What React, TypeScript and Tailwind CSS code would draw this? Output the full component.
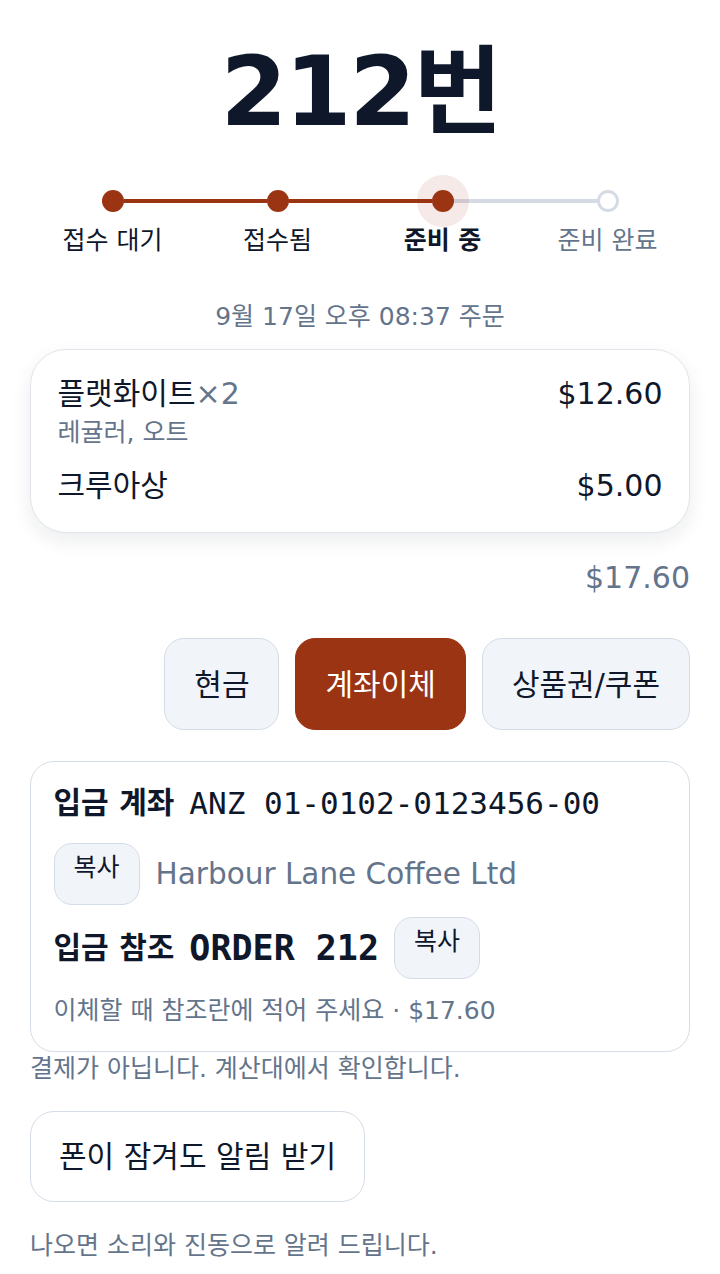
import React from "react";

const steps = ["접수 대기", "접수됨", "준비 중", "준비 완료"];

function Dot({ i }: { i: number }) {
  if (i < 2) return <div className="h-[22px] w-[22px] shrink-0 rounded-full bg-[#9a3412]" />;
  if (i === 2)
    return (
      <div className="relative z-10 h-[22px] w-[22px] shrink-0 rounded-full bg-[#9a3412] shadow-[0_0_0_15px_rgba(154,52,18,0.1)]" />
    );
  return <div className="h-[22px] w-[22px] shrink-0 rounded-full border-[3px] border-[#d5dbe5] bg-white" />;
}

function Stepper() {
  return (
    <div className="mt-[39px] grid grid-cols-4">
      {steps.map((s, i) => (
        <div key={s} className="flex flex-col items-center">
          <div className="flex h-[44px] w-full items-center">
            <div
              className={
                i === 0
                  ? "h-[4px] flex-1 bg-transparent"
                  : i <= 2
                  ? "h-[4px] flex-1 bg-[#9a3412]"
                  : "h-[4px] flex-1 bg-[#d5dbe5]"
              }
            />
            <Dot i={i} />
            <div
              className={
                i === 3
                  ? "h-[4px] flex-1 bg-transparent"
                  : i < 2
                  ? "h-[4px] flex-1 bg-[#9a3412]"
                  : "h-[4px] flex-1 bg-[#d5dbe5]"
              }
            />
          </div>
          <div
            className={
              i === 2
                ? "text-[25px] font-bold leading-[36px] text-[#0f172a]"
                : i === 3
                ? "text-[25px] leading-[36px] text-[#64748b]"
                : "text-[25px] leading-[36px] text-[#0f172a]"
            }
          >
            {s}
          </div>
        </div>
      ))}
    </div>
  );
}

function CopyBtn() {
  return (
    <button className="flex h-[62px] shrink-0 items-start justify-center rounded-[18px] border-[1.5px] border-[#d4dce7] bg-[#f1f5f9] px-[19px] pt-[7px] text-[25px] leading-[34px] text-[#0f172a]">
      복사
    </button>
  );
}

export default function App() {
  return (
    <div className="min-h-[1274px] bg-white px-[30px] pt-[44px] font-['DejaVu_Sans','Noto_Sans_CJK_KR',sans-serif] text-[#0f172a]">
      <h1 className="text-center text-[96px] font-bold leading-none tracking-[-0.025em] text-[#0f172a]">212번</h1>

      <Stepper />

      <div className="mt-[40px] text-center text-[25px] leading-[36px] text-[#64748b]">9월 17일 오후 08:37 주문</div>

      <div className="mt-[14px] rounded-[36px] border-[1.5px] border-[#e0e5ec] bg-white px-[26.5px] pb-[26px] pt-[24px] shadow-[0_8px_20px_rgba(15,23,42,0.08)]">
        <div className="flex items-center justify-between">
          <div className="text-[30px] leading-[40px]">
            플랫화이트<span className="text-[#64748b]">×2</span>
          </div>
          <div className="text-[30px] leading-[40px]">$12.60</div>
        </div>
        <div className="mt-[3px] text-[25px] leading-[32px] text-[#64748b]">레귤러, 오트</div>
        <div className="mt-[17px] flex items-center justify-between">
          <div className="text-[30px] leading-[40px]">크루아상</div>
          <div className="text-[30px] leading-[40px]">$5.00</div>
        </div>
      </div>

      <div className="mt-[25px] text-right text-[30px] leading-[40px] text-[#64748b]">$17.60</div>

      <div className="mt-[40px] flex justify-end gap-[16px]">
        <button className="h-[92px] rounded-[20px] border-[1.5px] border-[#d4dce7] bg-[#f1f5f9] px-[29px] text-[30px] text-[#0f172a]">
          현금
        </button>
        <button className="h-[92px] rounded-[20px] border-[1.5px] border-[#9a3412] bg-[#9a3412] px-[29px] text-[30px] text-white">
          계좌이체
        </button>
        <button className="h-[92px] rounded-[20px] border-[1.5px] border-[#d4dce7] bg-[#f1f5f9] px-[29px] text-[30px] text-[#0f172a]">
          상품권/쿠폰
        </button>
      </div>

      <div className="mt-[31px] rounded-[24px] border-[1.5px] border-[#d6dde7] bg-white px-[22.5px] pb-[23px] pt-[18.5px]">
        <div className="flex items-center gap-[15px] leading-[44px]">
          <span className="text-[30px] font-bold">입금 계좌</span>
          <span className="font-['DejaVu_Sans_Mono','Noto_Sans_CJK_KR',monospace] text-[31px]">ANZ 01-0102-0123456-00</span>
        </div>
        <div className="mt-[18px] flex items-center gap-[16px]">
          <CopyBtn />
          <span className="text-[29.5px] leading-[40px] text-[#64748b]">Harbour Lane Coffee Ltd</span>
        </div>
        <div className="mt-[12px] flex items-center gap-[15px]">
          <span className="text-[30px] font-bold leading-[44px]">입금 참조</span>
          <span className="font-['DejaVu_Sans_Mono','Noto_Sans_CJK_KR',monospace] text-[35px] font-bold leading-[44px]">ORDER 212</span>
          <CopyBtn />
        </div>
        <div className="mt-[15px] text-[25px] leading-[34px] text-[#64748b]">이체할 때 참조란에 적어 주세요 · $17.60</div>
      </div>

      <div className="text-[25px] leading-[34px] text-[#64748b]">결제가 아닙니다. 계산대에서 확인합니다.</div>

      <button className="mt-[25px] h-[91px] rounded-[24px] border-[1.5px] border-[#d6dde7] bg-white px-[28px] text-[30px] text-[#0f172a]">
        폰이 잠겨도 알림 받기
      </button>

      <div className="mt-[27px] text-[25px] leading-[34px] text-[#64748b]">나오면 소리와 진동으로 알려 드립니다.</div>
    </div>
  );
}
